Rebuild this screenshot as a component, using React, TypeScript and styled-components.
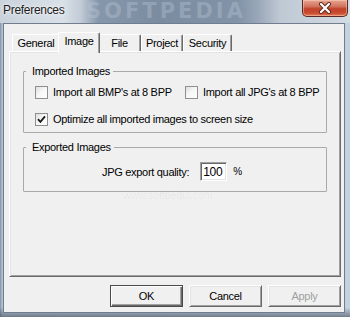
import React from 'react'
import styled, { createGlobalStyle } from 'styled-components'

const GlobalStyle = createGlobalStyle`
  html, body {
    margin: 0;
    padding: 0;
    background: #fff;
  }
  body {
    font-family: 'Liberation Sans', Arial, sans-serif;
  }
`

const Window = styled.div`
  width: 350px;
  height: 317px;
  display: flex;
  flex-direction: column;
  overflow: hidden;
  letter-spacing: -0.3px;
  background:
    linear-gradient(180deg, transparent 97%, rgba(60, 70, 85, 0.6) 100%),
    linear-gradient(90deg, #7c8b9e 0, #9eadbf 1px, #b9c7d6 3px, #c3d1e0 100%);
`

const TitleBar = styled.div`
  position: relative;
  flex: none;
  height: 23px;
  display: flex;
  justify-content: space-between;
  align-items: flex-start;
  padding: 0 2px 0 3px;
  background: linear-gradient(
    90deg,
    #c9d2dc 0%,
    #d9e0e7 18%,
    #c2ccd7 23%,
    #8797ab 28%,
    #7b8ca1 45%,
    #8293a8 68%,
    #9aa8b9 74%,
    #bfc9d4 80%,
    #d3dbe3 100%
  );
`

const Watermark = styled.span`
  position: absolute;
  left: 86px;
  top: 0;
  font-family: 'DejaVu Sans', sans-serif;
  font-weight: bold;
  font-size: 21px;
  line-height: 23px;
  letter-spacing: 3px;
  color: rgba(190, 202, 216, 0.35);
  pointer-events: none;
`

const Title = styled.span`
  position: relative;
  font-size: 12px;
  line-height: 16px;
  padding-top: 2px;
  color: #1b1b1b;
  text-shadow: 0 0 6px rgba(255, 255, 255, 0.95), 0 0 2px rgba(255, 255, 255, 0.9);
`

const CloseButton = styled.div`
  position: relative;
  width: 46px;
  height: 17px;
  display: flex;
  align-items: center;
  justify-content: center;
  box-sizing: border-box;
  border: 1px solid #5a2a24;
  border-top: none;
  border-radius: 0 0 5px 5px;
  background: linear-gradient(180deg, #e7a593 0%, #d2735d 40%, #c1422b 55%, #c94a31 80%, #e07a52 100%);
  box-shadow: inset 0 0 0 1px rgba(255, 220, 200, 0.45);
`

const Client = styled.div`
  flex: 1;
  margin: 0 5px 4px 3px;
  border: 1px solid #6f7d8e;
  background: #f0f0f0;
  padding: 8px 3px 5px 5px;
  display: flex;
  flex-direction: column;
`

const TabRow = styled.div`
  display: flex;
  align-items: flex-end;
  height: 19px;
  padding-left: 3px;
`

const Tab = styled.div<{ $w: number; $active?: boolean }>`
  position: relative;
  z-index: ${(p) => (p.$active ? 2 : 0)};
  box-sizing: border-box;
  width: ${(p) => (p.$active ? p.$w + 4 : p.$w)}px;
  height: ${(p) => (p.$active ? 21 : 17)}px;
  margin: ${(p) => (p.$active ? '0 -2px -2px' : '0')};
  padding-top: 2px;
  border: 1px solid;
  border-color: #fff #696969 transparent #fff;
  border-bottom: none;
  border-radius: 2px 2px 0 0;
  box-shadow: inset -1px 0 0 #a0a0a0;
  background: #f0f0f0;
  font-size: 11px;
  line-height: 13px;
  text-align: center;
  color: #000;
`

const Panel = styled.div`
  position: relative;
  z-index: 1;
  box-sizing: border-box;
  height: 226px;
  border: 1px solid;
  border-color: #fff #696969 #696969 #fff;
  box-shadow: inset 1px 1px 0 #e3e3e3, inset -1px -1px 0 #a0a0a0;
  background: #f0f0f0;
  padding: 13px 13px 0;
  display: flex;
  flex-direction: column;
  gap: 8px;
`

const Group = styled.fieldset`
  margin: 0;
  padding: 0;
  min-inline-size: 0;
  border: 1px solid #a9a9a9;
  border-radius: 1px;
`

const Legend = styled.legend`
  margin-left: 2px;
  padding: 0 3px 0 6px;
  font-size: 11px;
  line-height: 13px;
  color: #000;
`

const CheckGrid = styled.div`
  display: grid;
  grid-template-columns: 150px auto;
  row-gap: 14px;
  padding: 8px 0 6px 11px;
`

const CheckItem = styled.label<{ $span?: boolean }>`
  display: flex;
  align-items: center;
  gap: 5px;
  font-size: 11px;
  line-height: 13px;
  color: #000;
  white-space: nowrap;
  grid-column: ${(p) => (p.$span ? '1 / -1' : 'auto')};
`

const Box = styled.span`
  box-sizing: border-box;
  width: 13px;
  height: 13px;
  flex: none;
  display: flex;
  align-items: center;
  justify-content: center;
  border: 1px solid #8f8f8f;
  background: linear-gradient(135deg, #dedede 0%, #f6f6f6 45%, #fff 100%);
`

const QualityRow = styled.div`
  display: flex;
  align-items: center;
  padding: 8px 0 10px 78px;
  font-size: 11px;
  color: #000;
`

const NumberField = styled.div`
  box-sizing: border-box;
  width: 27px;
  height: 19px;
  margin: 0 6px 0 11px;
  padding: 2px 0 0 2px;
  border: 1px solid;
  border-color: #a0a0a0 #fff #fff #a0a0a0;
  box-shadow: inset 1px 1px 0 #696969, inset -1px -1px 0 #e3e3e3;
  background: #fff;
  font-size: 12px;
  line-height: 14px;
`

const Percent = styled.span`
  font-size: 10px;
`

const SiteMark = styled.span`
  position: absolute;
  left: 113px;
  top: 137px;
  font-size: 11px;
  color: rgba(0, 0, 0, 0.05);
`

const ButtonRow = styled.div`
  display: flex;
  justify-content: flex-end;
  gap: 6px;
  margin-top: 8px;
`

const Button = styled.button<{ $primary?: boolean }>`
  box-sizing: border-box;
  width: 73px;
  height: 22px;
  padding: 0;
  font-family: 'Liberation Sans', Arial, sans-serif;
  font-size: 11px;
  letter-spacing: -0.3px;
  color: ${(p) => (p.disabled ? '#a0a0a0' : '#000')};
  background: #f0f0f0;
  border: 1px solid;
  border-color: ${(p) => (p.$primary ? '#4a4a4a' : '#fff #696969 #696969 #fff')};
  box-shadow: ${(p) =>
    p.$primary
      ? 'inset 1px 1px 0 #fff, inset -1px -1px 0 #696969, inset -2px -2px 0 #a0a0a0'
      : 'inset 1px 1px 0 #e3e3e3, inset -1px -1px 0 #a0a0a0'};
`

const tabs = [
  { label: 'General', w: 48 },
  { label: 'Image', w: 38, active: true },
  { label: 'File', w: 43 },
  { label: 'Project', w: 42 },
  { label: 'Security', w: 49 },
]

const CheckMark = () => (
  <svg width="9" height="9" viewBox="0 0 9 9">
    <path d="M1 4.2 L3.4 6.8 L8 1.4" fill="none" stroke="#1a1a1a" strokeWidth="1.8" />
  </svg>
)

const CloseGlyph = () => (
  <svg width="14" height="12" viewBox="0 0 14 12">
    <path d="M3 2 L11 10 M11 2 L3 10" stroke="#5c2a20" strokeWidth="4" strokeLinecap="round" />
    <path d="M3 2 L11 10 M11 2 L3 10" stroke="#fff" strokeWidth="2.2" strokeLinecap="round" />
  </svg>
)

const Check: React.FC<{ checked?: boolean; span?: boolean; children: React.ReactNode }> = ({
  checked,
  span,
  children,
}) => (
  <CheckItem $span={span}>
    <Box>{checked && <CheckMark />}</Box>
    {children}
  </CheckItem>
)

const App: React.FC = () => {
  return (
    <>
      <GlobalStyle />
      <Window>
        <TitleBar>
          <Watermark>SOFTPEDIA</Watermark>
          <Title>Preferences</Title>
          <CloseButton>
            <CloseGlyph />
          </CloseButton>
        </TitleBar>
        <Client>
          <TabRow>
            {tabs.map((t) => (
              <Tab key={t.label} $w={t.w} $active={t.active}>
                {t.label}
              </Tab>
            ))}
          </TabRow>
          <Panel>
            <Group>
              <Legend>Imported Images</Legend>
              <CheckGrid>
                <Check>Import all BMP's at 8 BPP</Check>
                <Check>Import all JPG's at 8 BPP</Check>
                <Check checked span>
                  Optimize all imported images to screen size
                </Check>
              </CheckGrid>
            </Group>
            <Group>
              <Legend>Exported Images</Legend>
              <QualityRow>
                JPG export quality:
                <NumberField>100</NumberField>
                <Percent>%</Percent>
              </QualityRow>
            </Group>
            <SiteMark>www.softpedia.com</SiteMark>
          </Panel>
          <ButtonRow>
            <Button $primary>OK</Button>
            <Button>Cancel</Button>
            <Button disabled>Apply</Button>
          </ButtonRow>
        </Client>
      </Window>
    </>
  )
}

export default App
